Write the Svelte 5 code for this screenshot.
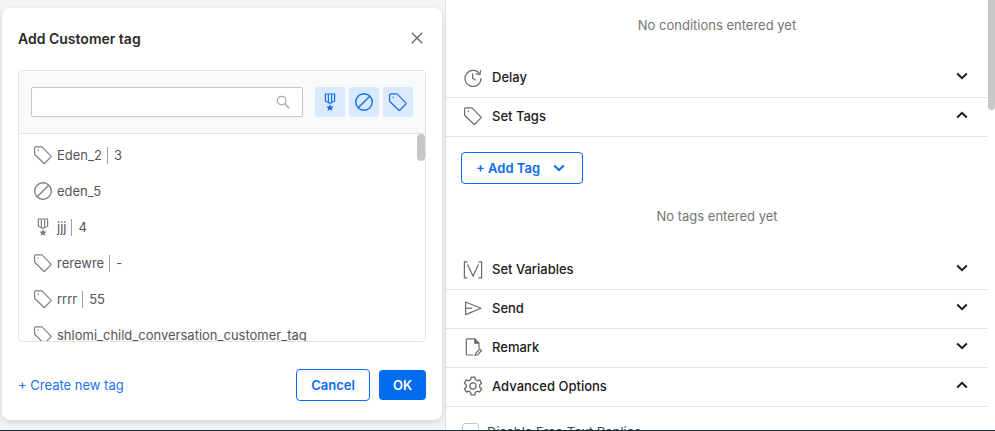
<script>
	const sections = [
		{ label: 'Delay', icon: 'delay', open: false },
		{ label: 'Set Tags', icon: 'tag', open: true },
		{ label: 'Set Variables', icon: 'vars', open: false },
		{ label: 'Send', icon: 'send', open: false },
		{ label: 'Remark', icon: 'remark', open: false },
		{ label: 'Advanced Options', icon: 'gear', open: true }
	];

	const tags = [
		{ name: 'Eden_2', count: '3', icon: 'tag' },
		{ name: 'eden_5', icon: 'ban' },
		{ name: 'jjj', count: '4', icon: 'medal' },
		{ name: 'rerewre', count: '-', icon: 'tag' },
		{ name: 'rrrr', count: '55', icon: 'tag' },
		{ name: 'shlomi_child_conversation_customer_tag', icon: 'tag' }
	];
</script>

{#snippet glyph(name)}
	<svg class="glyph" viewBox="0 0 20 20" width="20" height="20" fill="none" stroke="currentColor" stroke-width="1.2">
		{#if name === 'tag'}
			<path d="M1.600 3c0-.7.5-1.200 1.200-1.200H9l8.800 9c.4.4.4 1 0 1.400L12 18c-.4.400-1 .400-1.400 0L1.600 9.200z" stroke-linejoin="round" />
			<circle cx="5.300" cy="5.300" r=".8" fill="currentColor" stroke="none" />
		{:else if name === 'ban'}
			<circle cx="10" cy="10" r="8.300" stroke-width="1.400" />
			<path d="M4.200 15.800 15.800 4.200" stroke-width="1.400" />
		{:else if name === 'medal'}
			<path d="M5.400 2h9.200v7.200L10 11.400 5.400 9.200z" />
			<path d="M8.400 2.200v8M11.600 2.200v8" />
			<path d="m10 12 1.100 2.400 2.700.2-2 1.700.6 2.500-2.400-1.400-2.400 1.400.6-2.500-2-1.700 2.700-.2z" fill="currentColor" stroke="none" />
		{:else if name === 'delay'}
			<path d="M16.800 7.200A8 8 0 1 0 18 11" />
			<path d="m17.600 3.200-.6 4.400-4.300-.9" />
			<path d="M9.600 6.400v4.800l3 2" />
		{:else if name === 'vars'}
			<path d="M4.500 2.800H1.400v16h3.100M15.500 2.800h3.100v16h-3.100" />
			<path d="m4.500 5.500 5.500 11.500 5.500-11.500" />
		{:else if name === 'send'}
			<path d="M2.600 4v12.600L18 10.200z" stroke-linejoin="round" />
			<path d="M2.800 10.200h6.400" />
		{:else if name === 'remark'}
			<path d="M10.500 18H4.300c-.6 0-1-.4-1-1V2.800c0-.6.4-1 1-1h7.500l4.200 4.400v5.300" />
			<path d="M11.800 1.800v4.400H16" fill="currentColor" />
			<path d="m12.200 18.400.6-2.400 4-4 1.700 1.700-4 4z" />
		{:else if name === 'gear'}
			<g transform="translate(10 10) scale(1.080) translate(-10 -10)">
				<path d="M8.300 1.800h3.400l.5 2.400 1.700 1 2.300-.8 1.700 3-1.800 1.600v2l1.800 1.600-1.700 3-2.300-.8-1.700 1-.5 2.400H8.300l-.5-2.400-1.700-1-2.300.8-1.700-3 1.800-1.600v-2L2.100 7.400l1.700-3 2.300.8 1.700-1z" stroke-linejoin="round" />
				<circle cx="10" cy="10" r="2.900" />
			</g>
		{/if}
	</svg>
{/snippet}

{#snippet chevron(up)}
	<svg class="chevron" class:up viewBox="0 0 12 8" width="12" height="8" fill="none" stroke="currentColor" stroke-width="2">
		<path d="m1.200 1.500 4.800 4.700 4.800-4.700" />
	</svg>
{/snippet}

<div class="page">
	<aside class="backdrop">
		<div class="modal">
			<header class="modal-head">
				<h2>Add Customer tag</h2>
				<svg class="close" viewBox="0 0 12 12" width="12" height="12" stroke="currentColor" stroke-width="1.300">
					<path d="m.8.800 10.400 10.400M11.200.800.800 11.200" />
				</svg>
			</header>

			<div class="picker">
				<div class="toolbar">
					<div class="search">
						<svg viewBox="0 0 14 14" width="14" height="14" fill="none" stroke="currentColor" stroke-width="1.200">
							<circle cx="5.600" cy="5.600" r="4.300" />
							<path d="m8.800 8.800 4.400 4.400" stroke-width="1.500" />
						</svg>
					</div>
					<div class="filters">
						<button class="filter">{@render glyph('medal')}</button>
						<button class="filter">{@render glyph('ban')}</button>
						<button class="filter">{@render glyph('tag')}</button>
					</div>
				</div>
				<ul class="tag-list">
					{#each tags as tag}
						<li>
							{@render glyph(tag.icon)}
							<span>{tag.name}</span>
							{#if tag.count}
								<span class="count">{tag.count}</span>
							{/if}
						</li>
					{/each}
				</ul>
				<div class="thumb"></div>
			</div>

			<footer class="modal-foot">
				<span class="create">+ Create new tag</span>
				<div class="actions">
					<button class="btn cancel">Cancel</button>
					<button class="btn ok">OK</button>
				</div>
			</footer>
		</div>
	</aside>

	<main class="panel">
		<p class="empty conditions">No conditions entered yet</p>
		{#each sections as section}
			<div class="section">
				<span class="section-icon">{@render glyph(section.icon)}</span>
				<span class="section-label">{section.label}</span>
				{@render chevron(section.open)}
			</div>
			{#if section.label === 'Set Tags'}
				<div class="tags-body">
					<button class="add-tag">
						<span>+ Add Tag</span>
						{@render chevron(false)}
					</button>
					<p class="empty">No tags entered yet</p>
				</div>
			{/if}
		{/each}
		<label class="check">
			<span class="box"></span>
			<span>Disable Free Text Replies</span>
		</label>
		<div class="scroll-thumb"></div>
	</main>
</div>

<style>
	:global(body) {
		overflow: hidden;
		background: #fff;
	}

	.page {
		display: grid;
		grid-template-columns: 445px 1fr;
		height: 431px;
		box-sizing: border-box;
		overflow: hidden;
		border-bottom: 1px solid #1d2b36;
		font-family: Inter, "Liberation Sans", sans-serif;
		color: #2b2b2b;
	}

	.backdrop {
		background: #f4f4f4;
		padding: 8px 3px 0 2px;
	}

	.modal {
		display: flex;
		flex-direction: column;
		height: 412px;
		box-sizing: border-box;
		padding: 0 16px;
		background: #fff;
		border-radius: 8px;
		box-shadow: 0 2px 6px rgba(0, 0, 0, 0.14);
	}

	.modal-head {
		display: flex;
		align-items: center;
		justify-content: space-between;
		height: 62px;
		box-sizing: border-box;
		padding: 0 3px 2px 0;
		flex: none;
	}

	h2 {
		margin: 0;
		font-size: 14px;
		font-weight: 600;
		color: #2a2a2a;
	}

	.close {
		color: #666;
	}

	.picker {
		position: relative;
		height: 272px;
		flex: none;
		box-sizing: border-box;
		border: 1px solid #e0e2e5;
		border-radius: 4px;
		overflow: hidden;
	}

	.toolbar {
		display: flex;
		justify-content: space-between;
		height: 63px;
		box-sizing: border-box;
		padding: 16px 12px 0;
		background: #f8f9fb;
		border-bottom: 1px solid #e0e2e5;
	}

	.search {
		display: flex;
		align-items: center;
		justify-content: flex-end;
		width: 272px;
		height: 30px;
		box-sizing: border-box;
		padding-right: 12px;
		background: #fff;
		border: 1px solid #c8c8c8;
		border-radius: 2px;
		color: #a5a5a5;
	}

	.filters {
		display: flex;
		gap: 4px;
	}

	.filter {
		display: grid;
		place-items: center;
		width: 30px;
		height: 30px;
		padding: 0;
		background: #dbe9ff;
		border: 0;
		border-radius: 2px;
		color: #0f6ef0;
	}

	.tag-list {
		margin: 0;
		padding: 3px 0 0 14px;
		list-style: none;
	}

	.tag-list li {
		display: flex;
		align-items: center;
		height: 36px;
		font-size: 13px;
		color: #555;
	}

	.tag-list .glyph {
		margin-right: 4px;
		color: #808080;
	}

	.count {
		margin-left: 5px;
		padding-left: 6px;
		border-left: 1px solid #a0a0a0;
		line-height: 17px;
	}

	.thumb {
		position: absolute;
		top: 63px;
		right: 0;
		width: 8px;
		height: 27px;
		background: #c6c6c6;
		border-radius: 4px;
	}

	.modal-foot {
		display: flex;
		align-items: center;
		justify-content: space-between;
		height: 78px;
		flex: none;
		box-sizing: border-box;
		padding-top: 8px;
	}

	.create {
		font-size: 13px;
		color: #1a73f0;
	}

	.actions {
		display: flex;
		align-items: center;
		gap: 9px;
	}

	.btn {
		font: 600 13px Inter, "Liberation Sans", sans-serif;
		border-radius: 4px;
		padding: 0;
	}

	.cancel {
		width: 74px;
		height: 32px;
		background: #fff;
		color: #0a6af0;
		border: 1px solid #0a6af0;
	}

	.ok {
		width: 47px;
		height: 30px;
		background: #006cf0;
		color: #fff;
		border: 0;
	}

	.panel {
		position: relative;
		padding-right: 7px;
		border-left: 1px solid #ddd;
		overflow: hidden;
	}

	.empty {
		margin: 0;
		text-align: center;
		font-size: 13px;
		color: #757575;
	}

	.conditions {
		height: 59px;
		padding-top: 17px;
		box-sizing: border-box;
	}

	.section {
		display: flex;
		align-items: center;
		height: 39px;
		box-sizing: border-box;
		padding: 0 20px 2px 17px;
		border-bottom: 1px solid #e2e2e2;
		font-size: 13px;
		font-weight: 500;
		color: #1b1b1b;
	}

	.section-icon {
		display: grid;
		width: 20px;
		height: 20px;
		margin-right: 9px;
		color: #6f6a66;
	}

	.section-label {
		flex: 1;
	}

	.chevron {
		display: block;
	}

	.section .chevron {
		margin-top: -2px;
	}

	.chevron.up {
		transform: rotate(180deg);
	}

	.tags-body {
		height: 114px;
		box-sizing: border-box;
		padding: 15px 0 0 15px;
	}

	.add-tag {
		display: flex;
		align-items: center;
		justify-content: space-between;
		width: 122px;
		height: 32px;
		box-sizing: border-box;
		padding: 0 17px 0 14px;
		background: #fff;
		border: 1px solid #0a6af0;
		border-radius: 4px;
		color: #0a6af0;
		font: 600 13px Inter, "Liberation Sans", sans-serif;
	}

	.tags-body .empty {
		margin: 24px 0 0 -15px;
	}

	.check {
		display: flex;
		align-items: center;
		gap: 8px;
		margin: 16px 0 0 16px;
		font-size: 13px;
		color: #444;
	}

	.box {
		width: 17px;
		height: 17px;
		box-sizing: border-box;
		border: 1px solid #c4c4c4;
		border-radius: 3px;
	}

	.scroll-thumb {
		position: absolute;
		top: 0;
		right: 0;
		width: 7px;
		height: 110px;
		background: #c8c8c8;
		border-radius: 0 0 4px 4px;
	}
</style>
